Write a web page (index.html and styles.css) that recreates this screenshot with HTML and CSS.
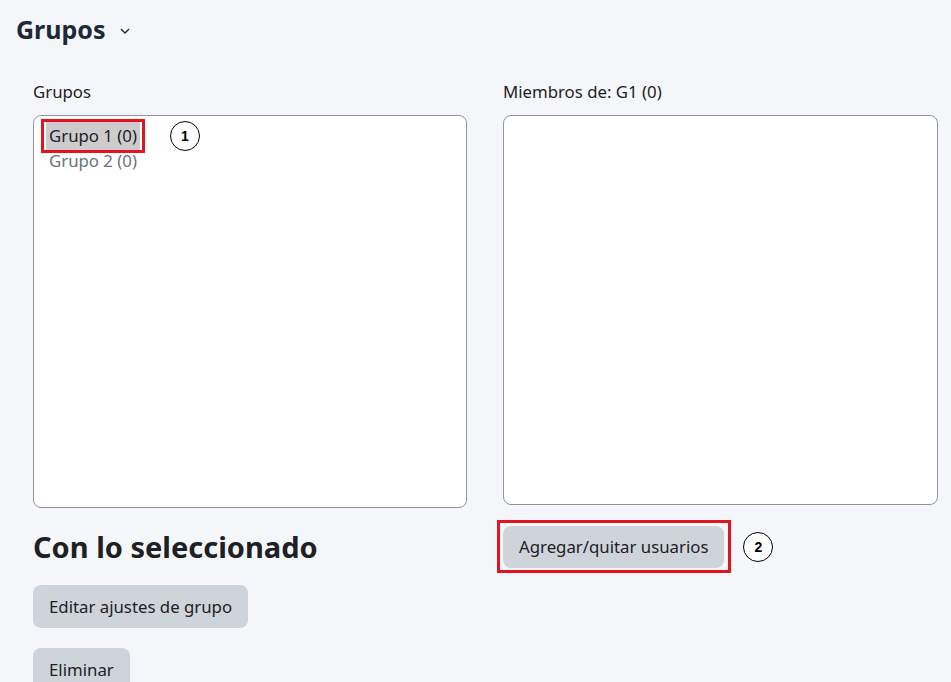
FILE: index.html
```html
<!DOCTYPE html>
<html lang="es">

<head>
  <title>Grupos</title>
  <meta charset="utf-8" />
  <link rel="stylesheet" href="styles.css">
</head>

<body>
  <div class="page">
    <h2 class="pageTitle">Grupos
      <svg class="chevron" width="10" height="6" viewBox="0 0 10 6"><path d="M1 1l4 4 4-4" fill="none" stroke="#1d2939" stroke-width="1.4"/></svg>
    </h2>
    <div class="groupsGrid">
      <div class="col">
        <label class="fieldLabel">Grupos</label>
        <div class="listBox leftBox">
          <div class="option first">
            <span class="mark"><span class="selected">Grupo 1 (0)</span></span>
            <span class="step">1</span>
          </div>
          <div class="option">Grupo 2 (0)</div>
        </div>
        <h3 class="subTitle">Con lo seleccionado</h3>
        <div class="btn">Editar ajustes de grupo</div>
        <div class="btn">Eliminar</div>
      </div>
      <div class="col">
        <label class="fieldLabel">Miembros de: G1 (0)</label>
        <div class="listBox rightBox"></div>
        <div class="actionRow">
          <span class="markBtn"><span class="btn inline">Agregar/quitar usuarios</span></span>
          <span class="step">2</span>
        </div>
      </div>
    </div>
  </div>
</body>

</html>
```

FILE: styles.css
```css
html,
body {
  margin: 0;
  height: 100%;
}

body {
  background-color: #f5f6fa;
  color: #1d2125;
  font: 16.8px "Noto Sans", "Open Sans", sans-serif;
  overflow: hidden;
}

.page {
  padding: 12px 14px 0 16px;
}

.pageTitle {
  margin: 0;
  font-size: 25px;
  font-weight: 700;
  color: #1d2939;
  display: flex;
  align-items: center;
  gap: 14px;
  height: 34px;
}

.chevron {
  margin-top: 4px;
}

.groupsGrid {
  display: grid;
  grid-template-columns: 434px 435px;
  gap: 36px;
  padding: 34px 0 0 17px;
  align-items: start;
}

.fieldLabel {
  display: block;
  height: 24px;
  line-height: 24px;
  margin-bottom: 11px;
}

.listBox {
  background-color: white;
  border: 1px solid #8f959e;
  border-radius: 8px;
  box-sizing: border-box;
  padding: 3px 7px 1px;
}

.leftBox {
  height: 393px;
}

.rightBox {
  height: 390px;
}

.option {
  height: 26px;
  line-height: 26px;
  color: #6a737b;
  padding-left: 8px;
}

.option.first {
  color: #1d2125;
  display: flex;
  align-items: center;
  gap: 25px;
  height: 34px;
  margin-bottom: -5px;
  padding-left: 0;
}

.mark {
  border: 3px solid #e3141f;
  padding: 0 2px 0 2px;
  display: inline-flex;
}

.selected {
  background-color: #cccccc;
  line-height: 28px;
  padding: 0 3px;
}

.step {
  width: 28px;
  height: 28px;
  border: 1.5px solid #000;
  border-radius: 50%;
  background-color: white;
  display: inline-flex;
  align-items: center;
  justify-content: center;
  font: 700 14px "Liberation Sans", Arial, sans-serif;
  color: #000;
}

.subTitle {
  margin: 19px 0 0;
  font-size: 29px;
  font-weight: 700;
  line-height: 40px;
}

.btn {
  display: inline-block;
  background-color: #ced4da;
  border-radius: 8px;
  padding: 0 16px;
  line-height: 43px;
  margin-top: 18px;
  color: #1d2125;
}

.btn + .btn {
  display: block;
  width: max-content;
  margin-top: 20px;
}

.actionRow {
  display: flex;
  align-items: center;
  gap: 12px;
  margin: 15px 0 0 -6px;
}

.markBtn {
  border: 3px solid #e3141f;
  padding: 3px 4px 2px 3px;
  display: inline-flex;
}

.btn.inline {
  margin: 0;
  line-height: 42px;
}
```
